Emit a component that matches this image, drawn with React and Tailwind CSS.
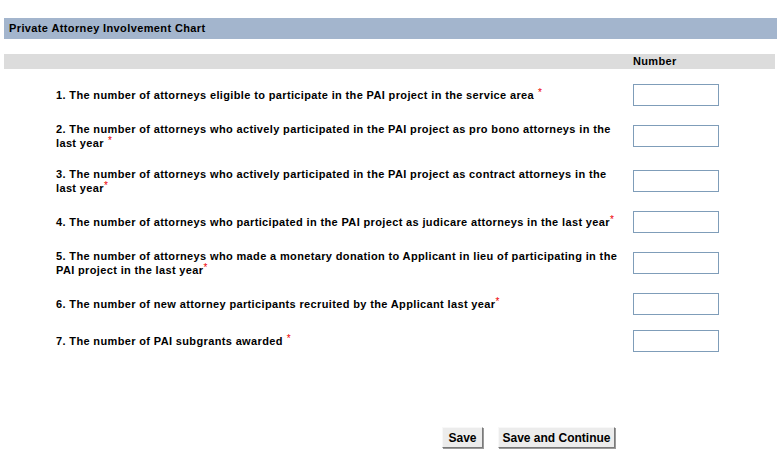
import React from "react";

const Star = ({ space }) => (
  <span className="text-[#ee0000] text-[10px] align-top leading-none font-normal tracking-normal" style={{ marginLeft: space ? 4 : 0 }}>*</span>
);

const rows = [
  { mt: "mt-[15px]", text: <>1. The number of attorneys eligible to participate in the PAI project in the service area<Star space /></> },
  { mt: "mt-[19px]", text: <>2. The number of attorneys who actively participated in the PAI project as pro bono attorneys in the<br />last year<Star space /></> },
  { mt: "mt-[23px]", text: <>3. The number of attorneys who actively participated in the PAI project as contract attorneys in the<br />last year<Star /></> },
  { mt: "mt-[19px]", text: <>4. The number of attorneys who participated in the PAI project as judicare attorneys in the last year<Star /></> },
  { mt: "mt-[19px]", text: <>5. The number of attorneys who made a monetary donation to Applicant in lieu of participating in the<br />PAI project in the last year<Star /></> },
  { mt: "mt-[19px]", text: <>6. The number of new attorney participants recruited by the Applicant last year<Star /></> },
  { mt: "mt-[15px]", text: <>7. The number of PAI subgrants awarded<Star space /></> },
];

export default function App() {
  return (
    <div className="w-[777px] h-[466px] bg-white text-black overflow-hidden pt-[18px]" style={{ fontFamily: '"Liberation Sans", Arial, sans-serif' }}>
      <div className="ml-[4px] h-[21px] bg-[#a3b5cd] flex items-center pl-[5px] text-[11px] font-bold tracking-[0.38px]">
        Private Attorney Involvement Chart
      </div>
      <div className="ml-[4px] mr-[2px] mt-[15px] h-[15px] bg-[#dcdcdc] flex items-center pl-[629px] text-[11px] font-bold tracking-[0.35px]">
        Number
      </div>
      <div className="flex flex-col">
        {rows.map((r, i) => (
          <div key={i} className={`${r.mt} h-[22px] flex items-center`}>
            <div className="w-[633px] pl-[56px] text-[11px] font-bold leading-[14px] whitespace-nowrap tracking-[0.36px]">{r.text}</div>
            <input type="text" className="w-[86px] h-[22px] border border-[#7f9db9] bg-white outline-none" />
          </div>
        ))}
      </div>
      <div className="mt-[75px] pl-[442px] flex gap-[15px]">
        <button className="w-[41px] h-[21px] bg-[#ececec] border border-t-[#f8f8f8] border-l-[#f8f8f8] border-r-[#7a7a7a] border-b-[#7a7a7a] shadow-[1px_1px_0_#9a9a9a] text-[12px] font-bold flex items-center justify-center leading-none">
          Save
        </button>
        <button className="w-[117px] h-[21px] bg-[#ececec] border border-t-[#f8f8f8] border-l-[#f8f8f8] border-r-[#7a7a7a] border-b-[#7a7a7a] shadow-[1px_1px_0_#9a9a9a] text-[12px] font-bold flex items-center justify-center leading-none">
          Save and Continue
        </button>
      </div>
    </div>
  );
}
